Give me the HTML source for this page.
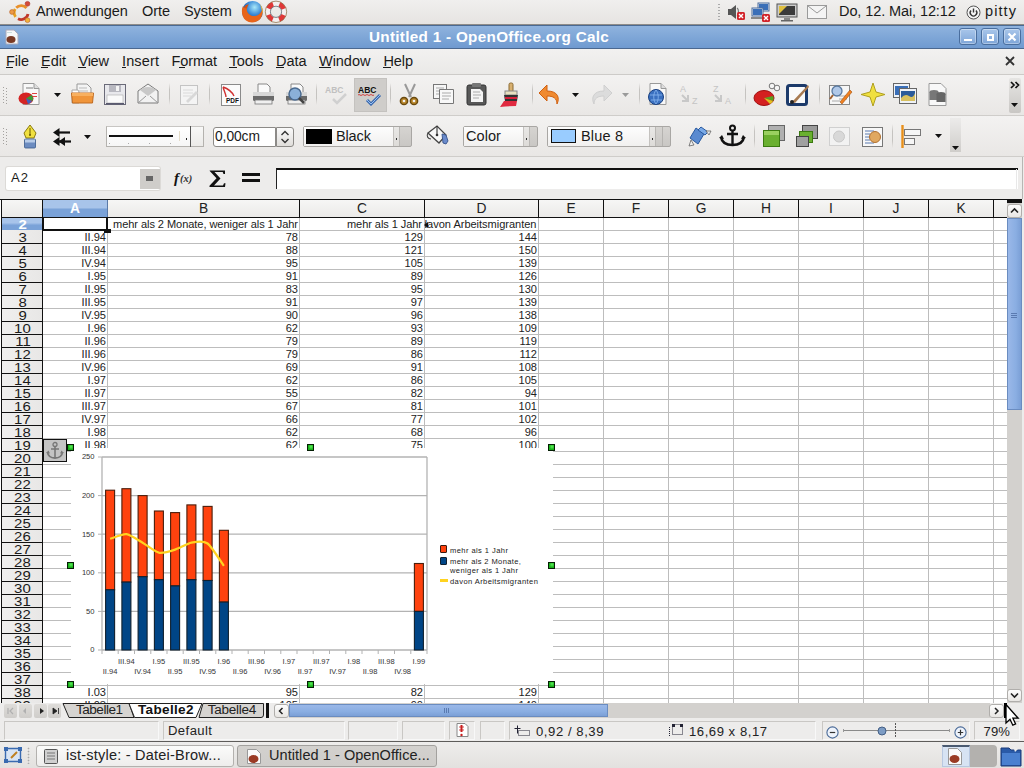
<!DOCTYPE html>
<html><head><meta charset="utf-8">
<style>
*{margin:0;padding:0;box-sizing:border-box}
html,body{width:1024px;height:768px;overflow:hidden;background:#edeceb;font-family:"Liberation Sans",sans-serif;position:relative}
.a{position:absolute}
.t{position:absolute;white-space:nowrap}
svg{display:block}
</style></head><body>
<div class="a" style="left:0px;top:0px;width:1024px;height:24px;background:linear-gradient(#f0efee,#e6e4e2);"></div>
<div class="a" style="left:0px;top:24px;width:1024px;height:1px;background:#8e8c89;"></div>
<svg class="a" style="left:2px;top:0px" width="30" height="24" viewBox="0 0 30 24">
<path d="M14.2 7.8 A7 7 0 0 1 24.5 8" fill="none" stroke="#e8902a" stroke-width="2.8"/>
<path d="M26 14 A7 7 0 0 1 16 18.8" fill="none" stroke="#c0392b" stroke-width="2.8"/>
<path d="M13.6 16.8 A7 7 0 0 1 13.2 9" fill="none" stroke="#e8a020" stroke-width="2.8"/>
<circle cx="25.5" cy="3.8" r="2.4" fill="#d54a38" stroke="#a8342a" stroke-width="0.6"/>
<circle cx="10" cy="12" r="2.4" fill="#ec9a44" stroke="#b8602a" stroke-width="0.6"/>
<circle cx="25.5" cy="20.2" r="2.4" fill="#f2b23a" stroke="#b8602a" stroke-width="0.6"/>
</svg>
<div class="t" style="left:36.00px;top:3.69px;font-size:14.53px;line-height:14.53px;color:#1a1a1a;letter-spacing:-0.095px;">Anwendungen</div>
<div class="t" style="left:142.00px;top:3.69px;font-size:14.53px;line-height:14.53px;color:#1a1a1a;letter-spacing:-0.090px;">Orte</div>
<div class="t" style="left:184.00px;top:3.69px;font-size:14.53px;line-height:14.53px;color:#1a1a1a;letter-spacing:-0.095px;">System</div>
<svg class="a" style="left:240px;top:0px" width="24" height="24" viewBox="0 0 24 24">
<defs><radialGradient id="ffg" cx="0.6" cy="0.3" r="0.7"><stop offset="0" stop-color="#a8e8f8"/><stop offset="0.5" stop-color="#3a8ad8"/><stop offset="1" stop-color="#1a3a80"/></radialGradient></defs>
<circle cx="12.5" cy="11.5" r="10.5" fill="url(#ffg)"/>
<path d="M3 6 C1 10 1.5 17 6 20.5 C10 23.5 17 23 20.5 18.5 C22.5 15.5 23 12 22.5 8.5 C21.5 12.5 19 15.5 15 16 C11 16.5 8 14 7 11 C6.5 9 7 7.5 8 6.5 C6 6.5 4.5 7 4 8z" fill="#e8641a"/>
<path d="M20 4 C22.5 7 23.5 11 22.5 14 C22 10 21 7 20 4z" fill="#f8b830"/>
<path d="M4 8 C5 5 7 4 9 4.5 C7.5 6 7 7 7 8.5z" fill="#d85010"/>
</svg>
<svg class="a" style="left:264px;top:0px" width="24" height="24" viewBox="0 0 24 24">
<circle cx="12" cy="11.8" r="8.2" fill="none" stroke="#f4f0f0" stroke-width="5"/>
<circle cx="12" cy="11.8" r="8.2" fill="none" stroke="#e03838" stroke-width="5" stroke-dasharray="6.44 6.44" stroke-dashoffset="-3.22"/>
<circle cx="12" cy="11.8" r="10.7" fill="none" stroke="#8a6a40" stroke-width="0.9" opacity="0.8"/>
<circle cx="12" cy="11.8" r="5.6" fill="none" stroke="#707880" stroke-width="0.9"/>
</svg>
<div class="a" style="left:718px;top:3px;width:2px;height:18px;background-image:radial-gradient(#aaa 40%,transparent 45%);background-size:2px 3px;"></div>
<svg class="a" style="left:726px;top:3px" width="20" height="18" viewBox="0 0 20 18">
<path d="M2 6h3l5-4v14l-5-4H2z" fill="#555" />
<path d="M11 5c2 1 2 7 0 8" stroke="#777" fill="none" stroke-width="1.2"/>
<rect x="11" y="9" width="8" height="8" rx="1.5" fill="#d2232a"/><path d="M13 11l4 4M17 11l-4 4" stroke="#fff" stroke-width="1.4"/>
</svg>
<svg class="a" style="left:750px;top:2px" width="22" height="21" viewBox="0 0 22 21">
<rect x="8" y="1" width="11" height="8" fill="#dfe6ef" stroke="#4c6c9c"/><rect x="9" y="2" width="9" height="6" fill="#3a6fb8"/>
<rect x="2" y="6" width="11" height="8" fill="#dfe6ef" stroke="#4c6c9c"/><rect x="3" y="7" width="9" height="6" fill="#3a6fb8"/>
<rect x="1" y="15" width="13" height="2" fill="#888"/>
<rect x="12" y="12" width="8" height="8" rx="1.5" fill="#d2232a"/><path d="M14 14l4 4M18 14l-4 4" stroke="#fff" stroke-width="1.4"/>
</svg>
<svg class="a" style="left:776px;top:3px" width="22" height="19" viewBox="0 0 22 19">
<rect x="1" y="1" width="20" height="13" fill="#ccc" stroke="#555"/><rect x="3" y="3" width="16" height="9" fill="#3b3b3b"/>
<path d="M3 3h8l-8 8z" fill="#e0c040"/><rect x="8" y="15" width="6" height="2" fill="#888"/><rect x="5" y="17" width="12" height="1.5" fill="#666"/>
</svg>
<svg class="a" style="left:806px;top:4px" width="22" height="16" viewBox="0 0 22 16">
<rect x="1.5" y="1.5" width="19" height="13" fill="#f4f4f4" stroke="#9a9a9a"/><path d="M2 2l9 7 9-7" fill="none" stroke="#9a9a9a"/>
</svg>
<div class="t" style="left:839.00px;top:3.69px;font-size:14.53px;line-height:14.53px;color:#1a1a1a;letter-spacing:-0.105px;">Do, 12. Mai, 12:12</div>
<svg class="a" style="left:966px;top:5px" width="15" height="15" viewBox="0 0 15 15">
<circle cx="7.5" cy="7.5" r="6.5" fill="#f4f4f4" stroke="#555" stroke-width="1"/>
<path d="M5 5.5a3.3 3.3 0 1 0 5 0" fill="none" stroke="#333" stroke-width="1.4"/><path d="M7.5 3.5v4" stroke="#333" stroke-width="1.4"/>
</svg>
<div class="t" style="left:985.00px;top:3.69px;font-size:14.53px;line-height:14.53px;color:#1a1a1a;letter-spacing:1.082px;">pitty</div>
<div class="a" style="left:0px;top:25px;width:1024px;height:1px;background:#4a6a93;"></div>
<div class="a" style="left:0px;top:26px;width:1024px;height:22px;background:linear-gradient(#8fb3de,#6f9ad0);"></div>
<div class="a" style="left:0px;top:48px;width:1024px;height:1px;background:#4b6890;"></div>
<svg class="a" style="left:5px;top:29px" width="14" height="16" viewBox="0 0 14 16">
<path d="M1 1h8l4 4v10H1z" fill="#f8f8f8" stroke="#aab"/>
<ellipse cx="6" cy="10.5" rx="4.5" ry="3.5" fill="#7a3a24"/>
<rect x="2" y="3" width="5" height="1" fill="#cdd"/>
</svg>
<div class="t" style="left:369.00px;top:28.57px;font-size:15.26px;line-height:15.26px;color:#ffffff;letter-spacing:0.302px;font-weight:bold;">Untitled 1 - OpenOffice.org Calc</div>
<div class="a" style="left:959px;top:28px;width:18px;height:17px;border:1px solid #4a6e9e;border-radius:3px;background:linear-gradient(#a9c6ea,#7ea5d8);box-shadow:inset 0 0 0 1px rgba(255,255,255,0.35);"></div>
<div class="a" style="left:981px;top:28px;width:18px;height:17px;border:1px solid #4a6e9e;border-radius:3px;background:linear-gradient(#a9c6ea,#7ea5d8);box-shadow:inset 0 0 0 1px rgba(255,255,255,0.35);"></div>
<div class="a" style="left:1003px;top:28px;width:18px;height:17px;border:1px solid #4a6e9e;border-radius:3px;background:linear-gradient(#a9c6ea,#7ea5d8);box-shadow:inset 0 0 0 1px rgba(255,255,255,0.35);"></div>
<div class="a" style="left:964px;top:39px;width:8px;height:2px;background:#fff;"></div>
<div class="a" style="left:987px;top:34px;width:7px;height:7px;border:2px solid #fff;"></div>
<svg class="a" style="left:1006px;top:31px" width="12" height="12" viewBox="0 0 12 12"><path d="M2.5 2.5l7 7M9.5 2.5l-7 7" stroke="#fff" stroke-width="2.2"/></svg>
<div class="a" style="left:0px;top:49px;width:1024px;height:25px;background:linear-gradient(#f2f1f0,#eae9e7);"></div>
<div class="a" style="left:0px;top:74px;width:1024px;height:1px;background:#cdcbc8;"></div>
<div class="t" style="left:6.00px;top:54.19px;font-size:14.53px;line-height:14.53px;color:#1a1a1a;letter-spacing:-0.146px;">File</div>
<div class="t" style="left:41.00px;top:54.19px;font-size:14.53px;line-height:14.53px;color:#1a1a1a;letter-spacing:-0.012px;">Edit</div>
<div class="t" style="left:78.50px;top:54.19px;font-size:14.53px;line-height:14.53px;color:#1a1a1a;letter-spacing:-0.262px;">View</div>
<div class="t" style="left:122.00px;top:54.19px;font-size:14.53px;line-height:14.53px;color:#1a1a1a;letter-spacing:0.133px;">Insert</div>
<div class="t" style="left:171.50px;top:54.19px;font-size:14.53px;line-height:14.53px;color:#1a1a1a;letter-spacing:-0.108px;">Format</div>
<div class="t" style="left:229.50px;top:54.19px;font-size:14.53px;line-height:14.53px;color:#1a1a1a;letter-spacing:0.015px;">Tools</div>
<div class="t" style="left:276.00px;top:54.19px;font-size:14.53px;line-height:14.53px;color:#1a1a1a;letter-spacing:-0.068px;">Data</div>
<div class="t" style="left:319.00px;top:54.19px;font-size:14.53px;line-height:14.53px;color:#1a1a1a;letter-spacing:-0.049px;">Window</div>
<div class="t" style="left:383.50px;top:54.19px;font-size:14.53px;line-height:14.53px;color:#1a1a1a;letter-spacing:-0.135px;">Help</div>
<div class="a" style="left:6px;top:67px;width:7px;height:1px;background:#1a1a1a;"></div>
<div class="a" style="left:41px;top:67px;width:7px;height:1px;background:#1a1a1a;"></div>
<div class="a" style="left:78px;top:67px;width:8px;height:1px;background:#1a1a1a;"></div>
<div class="a" style="left:122px;top:67px;width:4px;height:1px;background:#1a1a1a;"></div>
<div class="a" style="left:179px;top:67px;width:6px;height:1px;background:#1a1a1a;"></div>
<div class="a" style="left:229px;top:67px;width:8px;height:1px;background:#1a1a1a;"></div>
<div class="a" style="left:276px;top:67px;width:8px;height:1px;background:#1a1a1a;"></div>
<div class="a" style="left:319px;top:67px;width:12px;height:1px;background:#1a1a1a;"></div>
<div class="a" style="left:383px;top:67px;width:8px;height:1px;background:#1a1a1a;"></div>
<svg class="a" style="left:1004px;top:55px" width="12" height="12" viewBox="0 0 12 12"><path d="M2 2l8 8M10 2l-8 8" stroke="#333" stroke-width="1.8"/></svg>
<div class="a" style="left:0px;top:75px;width:1024px;height:40px;background:linear-gradient(#f3f2f1,#e9e7e5);"></div>
<div class="a" style="left:0px;top:115px;width:1024px;height:1px;background:#cfcdca;"></div>
<svg class="a" style="left:3px;top:87px" width="4" height="17" viewBox="0 0 4 17"><rect x="0" y="0" width="1" height="1" fill="#a3a19e"/><rect x="3" y="1" width="1" height="1" fill="#a3a19e"/><rect x="0" y="3" width="1" height="1" fill="#a3a19e"/><rect x="3" y="4" width="1" height="1" fill="#a3a19e"/><rect x="0" y="6" width="1" height="1" fill="#a3a19e"/><rect x="3" y="7" width="1" height="1" fill="#a3a19e"/><rect x="0" y="9" width="1" height="1" fill="#a3a19e"/><rect x="3" y="10" width="1" height="1" fill="#a3a19e"/><rect x="0" y="12" width="1" height="1" fill="#a3a19e"/><rect x="3" y="13" width="1" height="1" fill="#a3a19e"/><rect x="0" y="15" width="1" height="1" fill="#a3a19e"/><rect x="3" y="16" width="1" height="1" fill="#a3a19e"/></svg>
<svg class="a" style="left:17px;top:82px" width="25" height="25" viewBox="0 0 25 25"><path d="M6 1.5h11l5 5v16H6z" fill="#f8f8f8" stroke="#9a9a9a"/><path d="M17 1.5v5h5" fill="#ddd" stroke="#9a9a9a"/>
<rect x="9" y="5" width="7" height="2" fill="#bbb"/><rect x="15" y="11" width="5" height="1" fill="#e04040"/><rect x="15" y="14" width="5" height="1" fill="#e04040"/>
<ellipse cx="9" cy="16.5" rx="7.5" ry="6" fill="#d42424"/><path d="M9 16.5l5.5-3.5a7 6 0 0 1 1 6z" fill="#3a9a3a"/><path d="M9 16.5l2 5.5a7 6 0 0 0 4-3z" fill="#4060c0"/></svg>
<svg class="a" style="left:54px;top:93px" width="7" height="4" viewBox="0 0 7 4"><path d="M0 0h7l-3.5 4z" fill="#111"/></svg>
<svg class="a" style="left:70px;top:82px" width="26" height="24" viewBox="0 0 26 24"><path d="M7 2h10l4 4v12H7z" fill="#f4f4f4" stroke="#999"/><path d="M9 6h8M9 9h9" stroke="#bbb"/>
<path d="M2 8h6l1 2h-0v11H2z" fill="#fff" stroke="#aaa"/>
<path d="M1.5 11h22l-1 10h-20z" fill="#f0953a" stroke="#c06a20"/><path d="M2 11h21v3H2z" fill="#f8b060"/></svg>
<svg class="a" style="left:103px;top:82px" width="25" height="25" viewBox="0 0 25 25"><rect x="1.5" y="2.5" width="21" height="20" fill="#e8e8ec" stroke="#6a6a78"/><rect x="6" y="3" width="12" height="7" fill="#b8b8c0"/><rect x="13" y="4" width="3" height="5" fill="#f4f4f4"/>
<rect x="4" y="13" width="16" height="8" fill="#fafafa" stroke="#aaa" stroke-width="0.6"/><rect x="3" y="21" width="18" height="1.5" fill="#5a5a70"/></svg>
<svg class="a" style="left:136px;top:82px" width="24" height="24" viewBox="0 0 24 24"><path d="M2 9l10-7 10 7v12H2z" fill="#f2f2f2" stroke="#7a7a7a"/><path d="M4 8c3-4 13-4 16 0l-8 6z" fill="#c8c8c8"/><path d="M2 21l8-7M22 21l-8-7" stroke="#999" fill="none"/></svg>
<div class="a" style="left:169px;top:83px;width:1px;height:22px;background:linear-gradient(rgba(180,178,175,0),#c5c3c0 30%,#c5c3c0 70%,rgba(180,178,175,0));"></div>
<svg class="a" style="left:178px;top:83px" width="23" height="23" viewBox="0 0 23 23"><rect x="2.5" y="2.5" width="17" height="19" fill="#f4f4f4" stroke="#c4c4c4"/><path d="M5 7h10M5 10h10M5 13h8" stroke="#dadada"/><path d="M8 18l10-10 2 2-10 10z" fill="#d8d8d8"/></svg>
<div class="a" style="left:209px;top:83px;width:1px;height:22px;background:linear-gradient(rgba(180,178,175,0),#c5c3c0 30%,#c5c3c0 70%,rgba(180,178,175,0));"></div>
<svg class="a" style="left:219px;top:82px" width="24" height="26" viewBox="0 0 24 26"><rect x="2.5" y="2.5" width="19" height="21" fill="#fbfbfb" stroke="#8a8a8a"/><path d="M4 5c6 2 9 5 11 9M4 5c1 4 3 7 3 10" stroke="#d03030" fill="none" stroke-width="1.4"/>
<text x="7" y="21" font-family="Liberation Sans" font-size="6.5" font-weight="bold" fill="#111">PDF</text></svg>
<svg class="a" style="left:251px;top:82px" width="25" height="24" viewBox="0 0 25 24"><path d="M7 2h9l3 3v6H7z" fill="#fafafa" stroke="#888"/><rect x="2" y="10" width="21" height="9" rx="1.5" fill="#6a6a6a"/><rect x="2" y="10" width="21" height="4" fill="#d8d8d8"/>
<rect x="4" y="18" width="17" height="4" fill="#f0f0f0" stroke="#777" stroke-width="0.8"/></svg>
<svg class="a" style="left:284px;top:82px" width="25" height="25" viewBox="0 0 25 25"><path d="M7 2h9l3 3v6H7z" fill="#fafafa" stroke="#888"/><rect x="2" y="10" width="21" height="9" rx="1.5" fill="#6a6a6a"/><rect x="2" y="10" width="21" height="4" fill="#d8d8d8"/>
<rect x="4" y="18" width="17" height="4" fill="#f0f0f0" stroke="#777" stroke-width="0.8"/><circle cx="11" cy="12" r="6" fill="#8ab0d8" stroke="#4a6a90" stroke-width="1.5"/><path d="M15 16l5 5" stroke="#444" stroke-width="2.5"/></svg>
<div class="a" style="left:316px;top:83px;width:1px;height:22px;background:linear-gradient(rgba(180,178,175,0),#c5c3c0 30%,#c5c3c0 70%,rgba(180,178,175,0));"></div>
<svg class="a" style="left:324px;top:84px" width="26" height="22" viewBox="0 0 26 22"><text x="1" y="9" font-family="Liberation Sans" font-size="8.5" font-weight="bold" fill="#c0c0c0">ABC</text><path d="M9 15l4 4 9-9" stroke="#d0d0d0" stroke-width="2.5" fill="none"/></svg>
<div class="a" style="left:354px;top:78px;width:33px;height:34px;background:#cfcdca;border:1px solid #c4c2bf;"></div>
<svg class="a" style="left:357px;top:84px" width="27" height="22" viewBox="0 0 27 22"><text x="1" y="9" font-family="Liberation Sans" font-size="8.5" font-weight="bold" fill="#111">ABC</text><path d="M1 11q1-1 2 0t2 0 2 0 2 0 2 0 2 0 2 0 2 0" stroke="#d02020" fill="none" stroke-width="0.8"/><path d="M10 16l4 4 9-9" stroke="#3a6ab0" stroke-width="3" fill="none"/><path d="M10 16l4 4 9-9" stroke="#9ac0f0" stroke-width="1" fill="none"/></svg>
<div class="a" style="left:390px;top:83px;width:1px;height:22px;background:linear-gradient(rgba(180,178,175,0),#c5c3c0 30%,#c5c3c0 70%,rgba(180,178,175,0));"></div>
<svg class="a" style="left:398px;top:82px" width="24" height="25" viewBox="0 0 24 25"><path d="M7 2l6 13M17 2l-6 13" stroke="#999" stroke-width="2"/><circle cx="6" cy="19" r="3.6" fill="#b8862a" stroke="#6a4a10" stroke-width="1.5"/><circle cx="16" cy="19" r="3.6" fill="#b8862a" stroke="#6a4a10" stroke-width="1.5"/><circle cx="6" cy="19" r="1.3" fill="#f0f0f0"/><circle cx="16" cy="19" r="1.3" fill="#f0f0f0"/></svg>
<svg class="a" style="left:432px;top:83px" width="24" height="22" viewBox="0 0 24 22"><rect x="1.5" y="1.5" width="13" height="14" fill="#f6f6f6" stroke="#777"/><path d="M4 5h8M4 8h8M4 11h6" stroke="#aaa"/><path d="M7.5 6.5h14v14h-14z" fill="#f8f8f8" stroke="#777"/><path d="M10 10h9M10 13h9M10 16h7" stroke="#aaa"/></svg>
<svg class="a" style="left:465px;top:82px" width="24" height="25" viewBox="0 0 24 25"><rect x="2" y="3" width="19" height="20" rx="2" fill="#585858" stroke="#333"/><rect x="7" y="1" width="9" height="4" rx="1" fill="#777"/><path d="M6 7h9l3 3v10H6z" fill="#f4f4f4"/><path d="M8 10h7M8 13h8M8 16h6" stroke="#aaa"/></svg>
<svg class="a" style="left:498px;top:82px" width="24" height="26" viewBox="0 0 24 26"><rect x="11" y="1" width="4" height="9" rx="1.5" fill="#d8b070" stroke="#8a6a30"/><rect x="7" y="9" width="12" height="4" fill="#e8e0c0" stroke="#888"/><path d="M6 13h14l-1 6H7z" fill="#333"/><path d="M7 15h12v2H7z" fill="#d8203a"/><path d="M6 19h13L18 24q-7 0-16 1z" fill="#e02a40"/></svg>
<div class="a" style="left:532px;top:83px;width:1px;height:22px;background:linear-gradient(rgba(180,178,175,0),#c5c3c0 30%,#c5c3c0 70%,rgba(180,178,175,0));"></div>
<svg class="a" style="left:537px;top:83px" width="26" height="23" viewBox="0 0 26 23"><path d="M10 2L2 10l8 8v-5c6 0 10 2 10 8 3-6 1-13-10-13z" fill="#f08a30" stroke="#d06010" stroke-width="1"/></svg>
<svg class="a" style="left:572px;top:93px" width="7" height="4" viewBox="0 0 7 4"><path d="M0 0h7l-3.5 4z" fill="#111"/></svg>
<svg class="a" style="left:588px;top:83px" width="26" height="23" viewBox="0 0 26 23"><path d="M16 2l8 8-8 8v-5c-6 0-10 2-10 8-3-6-1-13 10-13z" fill="#dcdcdc" stroke="#cfcfcf" stroke-width="1"/></svg>
<svg class="a" style="left:622px;top:93px" width="7" height="4" viewBox="0 0 7 4"><path d="M0 0h7l-3.5 4z" fill="#9a9a9a"/></svg>
<div class="a" style="left:639px;top:83px;width:1px;height:22px;background:linear-gradient(rgba(180,178,175,0),#c5c3c0 30%,#c5c3c0 70%,rgba(180,178,175,0));"></div>
<svg class="a" style="left:645px;top:82px" width="25" height="25" viewBox="0 0 25 25"><path d="M5 1.5h11l5 5v16H5z" fill="#f8f8f8" stroke="#999"/><path d="M16 1.5v5h5" fill="#ddd" stroke="#999"/><circle cx="11" cy="15" r="7.5" fill="#3a70c0" stroke="#1a4080"/><path d="M5 13h12M6 18h11M11 8c-3 4-3 10 0 14M11 8c3 4 3 10 0 14" stroke="#8ab8f0" fill="none" stroke-width="0.8"/></svg>
<svg class="a" style="left:679px;top:82px" width="24" height="25" viewBox="0 0 24 25"><text x="1" y="10" font-family="Liberation Sans" font-size="9" fill="#c4c4c4">A</text><text x="13" y="22" font-family="Liberation Sans" font-size="9" fill="#c4c4c4">Z</text><path d="M3 13l6 6M3 19h6v-6" stroke="#c8c8c8" stroke-width="2" fill="none"/></svg>
<svg class="a" style="left:712px;top:82px" width="24" height="25" viewBox="0 0 24 25"><text x="1" y="10" font-family="Liberation Sans" font-size="9" fill="#c4c4c4">Z</text><text x="13" y="22" font-family="Liberation Sans" font-size="9" fill="#c4c4c4">A</text><path d="M3 13l6 6M3 19h6v-6" stroke="#c8c8c8" stroke-width="2" fill="none"/></svg>
<div class="a" style="left:745px;top:83px;width:1px;height:22px;background:linear-gradient(rgba(180,178,175,0),#c5c3c0 30%,#c5c3c0 70%,rgba(180,178,175,0));"></div>
<svg class="a" style="left:752px;top:82px" width="28" height="25" viewBox="0 0 28 25"><circle cx="20" cy="4" r="2.8" fill="#f4f4f4" stroke="#777"/><circle cx="25" cy="6" r="2.8" fill="#f4f4f4" stroke="#777"/><ellipse cx="12" cy="16" rx="10" ry="7.5" fill="#d42020" stroke="#a01010"/><path d="M12 16l9-2a10 7.5 0 0 1 0 5z" fill="#58a020"/><path d="M12 16l9 3a10 7.5 0 0 1-3 3z" fill="#e0c020"/></svg>
<svg class="a" style="left:786px;top:82px" width="24" height="25" viewBox="0 0 24 25"><rect x="1.5" y="3.5" width="19" height="19" rx="2" fill="#fafafa" stroke="#1c3a6a" stroke-width="3"/><path d="M6 20L22 3l1 2L9 21z" fill="#a87a50"/><circle cx="6" cy="20" r="2" fill="#222"/></svg>
<div class="a" style="left:819px;top:83px;width:1px;height:22px;background:linear-gradient(rgba(180,178,175,0),#c5c3c0 30%,#c5c3c0 70%,rgba(180,178,175,0));"></div>
<svg class="a" style="left:828px;top:82px" width="25" height="25" viewBox="0 0 25 25"><rect x="1.5" y="3.5" width="20" height="19" fill="#f6f6f6" stroke="#888"/><path d="M11 14h8M11 17h8M4 19h8" stroke="#aaa"/><circle cx="9" cy="9" r="5" fill="#b0c8e8" stroke="#5a7aa0" stroke-width="1.3"/><path d="M5 13l-3 4" stroke="#a06030" stroke-width="2"/><path d="M12 20l10-12 2 2-10 12z" fill="#f08020" stroke="#a05010" stroke-width="0.6"/></svg>
<svg class="a" style="left:860px;top:82px" width="26" height="25" viewBox="0 0 26 25"><path d="M13 1L16 10 25 12.5 16 15 13 24 10 15 1 12.5 10 10z" fill="#f0e040" stroke="#b0a020" stroke-width="1"/></svg>
<svg class="a" style="left:892px;top:82px" width="26" height="23" viewBox="0 0 26 23"><rect x="1.5" y="1.5" width="16" height="14" fill="#eef2f8" stroke="#666"/><rect x="3" y="4" width="13" height="9" fill="#3a6fb8"/><rect x="7.5" y="6.5" width="17" height="15" fill="#eef2f8" stroke="#666"/><rect x="9" y="9" width="14" height="10" fill="#2a5a9a"/><path d="M9 16q4-5 8-2t6-3v8H9z" fill="#d8c060"/></svg>
<svg class="a" style="left:925px;top:82px" width="25" height="25" viewBox="0 0 25 25"><path d="M4 1.5h12l5 5v17H4z" fill="#f8f8f8" stroke="#999"/><ellipse cx="9" cy="10" rx="4.5" ry="2" fill="#777"/><rect x="4.5" y="10" width="9" height="8" fill="#777"/><ellipse cx="16" cy="12" rx="4.5" ry="2" fill="#666"/><rect x="11.5" y="12" width="9" height="8" fill="#666"/></svg>
<div class="a" style="left:1009px;top:78px;width:12px;height:35px;background:linear-gradient(#e6e5e3,#c9c7c4);border-radius:2px;"></div>
<svg class="a" style="left:1010px;top:81px" width="10" height="8" viewBox="0 0 10 8"><path d="M1 1l3 3-3 3M5.5 1l3 3-3 3" stroke="#111" stroke-width="1.7" fill="none"/></svg>
<svg class="a" style="left:1011px;top:103px" width="7" height="4" viewBox="0 0 7 4"><path d="M0 0h7l-3.5 4z" fill="#111"/></svg>
<div class="a" style="left:0px;top:116px;width:1024px;height:40px;background:linear-gradient(#f3f2f1,#e9e7e5);"></div>
<div class="a" style="left:0px;top:156px;width:1024px;height:1px;background:#cfcdca;"></div>
<svg class="a" style="left:3px;top:128px" width="4" height="17" viewBox="0 0 4 17"><rect x="0" y="0" width="1" height="1" fill="#a3a19e"/><rect x="3" y="1" width="1" height="1" fill="#a3a19e"/><rect x="0" y="3" width="1" height="1" fill="#a3a19e"/><rect x="3" y="4" width="1" height="1" fill="#a3a19e"/><rect x="0" y="6" width="1" height="1" fill="#a3a19e"/><rect x="3" y="7" width="1" height="1" fill="#a3a19e"/><rect x="0" y="9" width="1" height="1" fill="#a3a19e"/><rect x="3" y="10" width="1" height="1" fill="#a3a19e"/><rect x="0" y="12" width="1" height="1" fill="#a3a19e"/><rect x="3" y="13" width="1" height="1" fill="#a3a19e"/><rect x="0" y="15" width="1" height="1" fill="#a3a19e"/><rect x="3" y="16" width="1" height="1" fill="#a3a19e"/></svg>
<svg class="a" style="left:21px;top:124px" width="18" height="25" viewBox="0 0 18 25"><path d="M9 1L15 9 13 14H5L3 9z" fill="#f0e040" stroke="#8a7a10"/><path d="M9 4v7" stroke="#6a5a00"/><circle cx="9" cy="11" r="1" fill="#6a5a00"/><rect x="3.5" y="15" width="11" height="9" rx="1" fill="#6c8cc0" stroke="#3a5a8a" stroke-width="0.8"/><rect x="4" y="15.5" width="10" height="3" fill="#b8cce8"/></svg>
<svg class="a" style="left:50px;top:127px" width="23" height="19" viewBox="0 0 23 19"><path d="M20 5.5H5" stroke="#111" stroke-width="2.2"/><path d="M9.5 1L3 5.5l6.5 4.5z" fill="#111"/><path d="M21 14.5H7" stroke="#111" stroke-width="2.2"/><path d="M9.5 10L3 14.5l6.5 4.5zM15 10l-6.5 4.5 6.5 4.5z" fill="#111"/></svg>
<svg class="a" style="left:84px;top:135px" width="7" height="4" viewBox="0 0 7 4"><path d="M0 0h7l-3.5 4z" fill="#111"/></svg>
<div class="a" style="left:106px;top:126px;width:98px;height:21px;background:#f4f3f2;border:1px solid #b4b2ae;border-top-color:#c8c6c3;"></div>
<div class="a" style="left:107px;top:127px;width:83px;height:19px;background:linear-gradient(#fff,#f6f6f6);"></div>
<div class="a" style="left:109px;top:135px;width:64px;height:2px;background:#111;"></div>
<div class="a" style="left:179px;top:131px;width:1px;height:10px;background:#e4dcc8;"></div>
<div class="a" style="left:186px;top:138px;width:1px;height:2px;background:#222;"></div>
<div class="a" style="left:190px;top:126px;width:1px;height:21px;background:#555;"></div>
<div class="a" style="left:191px;top:127px;width:12px;height:19px;background:linear-gradient(#f8f8f7,#ebeae8);"></div>
<div class="a" style="left:109px;top:143px;width:1px;height:1px;background:#aaa;"></div>
<div class="a" style="left:128px;top:143px;width:1px;height:1px;background:#aaa;"></div>
<div class="a" style="left:149px;top:143px;width:1px;height:1px;background:#aaa;"></div>
<div class="a" style="left:170px;top:143px;width:1px;height:1px;background:#aaa;"></div>
<div class="a" style="left:213px;top:127px;width:63px;height:20px;background:#fff;border:1px solid #8c8a87;border-radius:3px 0 0 3px;"></div>
<div class="t" style="left:215.00px;top:129.80px;font-size:13.81px;line-height:13.81px;color:#1a1a1a;letter-spacing:-0.058px;">0,00cm</div>
<div class="a" style="left:276px;top:127px;width:18px;height:20px;background:linear-gradient(#fafafa,#e0dedb);border:1px solid #8c8a87;border-radius:0 3px 3px 0;"></div>
<svg class="a" style="left:279px;top:129px" width="12" height="16" viewBox="0 0 12 16"><path d="M2.5 6l3.5-3.5L9.5 6M2.5 10l3.5 3.5L9.5 10" stroke="#333" stroke-width="1.4" fill="none"/></svg>
<div class="a" style="left:303px;top:126px;width:109px;height:21px;background:linear-gradient(#d6d4d1,#c9c7c4);border:1px solid #a9a7a4;border-radius:2px;"></div>
<div class="a" style="left:304px;top:127px;width:89px;height:19px;background:linear-gradient(#fdfdfd,#f1f0ef);"></div>
<div class="a" style="left:393px;top:127px;width:7px;height:19px;background:linear-gradient(#e9e8e6,#dddbd8);border-left:1px solid #c4c2bf;border-right:1px solid #b9b7b4;"></div>
<div class="a" style="left:396px;top:138px;width:1px;height:2px;background:#333;"></div>
<div class="a" style="left:306px;top:129px;width:26px;height:15px;background:#000;"></div>
<div class="t" style="left:336.00px;top:128.69px;font-size:14.53px;line-height:14.53px;color:#1a1a1a;letter-spacing:-0.144px;">Black</div>
<svg class="a" style="left:425px;top:123px" width="25" height="25" viewBox="0 0 25 25"><path d="M3 10l9-7 9 9-7 8z" fill="#f8f8f8" stroke="#444" stroke-width="1.3"/><path d="M3 10c-2 3 0 6 3 6" stroke="#444" fill="none" stroke-width="1.1"/><path d="M17 11l4 1 2 6-2 3-3-1z" fill="#6a8acb" stroke="#36528a" stroke-width="0.9"/><path d="M12 3v8" stroke="#333" stroke-width="1.1"/><circle cx="12" cy="12" r="1.3" fill="#333"/></svg>
<div class="a" style="left:463px;top:126px;width:75px;height:21px;background:linear-gradient(#d6d4d1,#c9c7c4);border:1px solid #a9a7a4;border-radius:2px;"></div>
<div class="a" style="left:464px;top:127px;width:59px;height:19px;background:linear-gradient(#fdfdfd,#f1f0ef);"></div>
<div class="a" style="left:523px;top:127px;width:7px;height:19px;background:linear-gradient(#e9e8e6,#dddbd8);border-left:1px solid #c4c2bf;border-right:1px solid #b9b7b4;"></div>
<div class="a" style="left:526px;top:138px;width:1px;height:2px;background:#333;"></div>
<div class="t" style="left:466.00px;top:128.69px;font-size:14.53px;line-height:14.53px;color:#1a1a1a;letter-spacing:0.065px;">Color</div>
<div class="a" style="left:547px;top:126px;width:124px;height:21px;background:linear-gradient(#d6d4d1,#c9c7c4);border:1px solid #a9a7a4;border-radius:2px;"></div>
<div class="a" style="left:548px;top:127px;width:101px;height:19px;background:linear-gradient(#fdfdfd,#f1f0ef);"></div>
<div class="a" style="left:649px;top:127px;width:7px;height:19px;background:linear-gradient(#e9e8e6,#dddbd8);border-left:1px solid #c4c2bf;border-right:1px solid #b9b7b4;"></div>
<div class="a" style="left:652px;top:138px;width:1px;height:2px;background:#333;"></div>
<div class="a" style="left:662px;top:127px;width:1px;height:19px;background:#b5b3b0;"></div>
<div class="a" style="left:551px;top:129px;width:25px;height:14px;background:#99ccff;border:1px solid #111;"></div>
<div class="t" style="left:581.00px;top:128.69px;font-size:14.53px;line-height:14.53px;color:#1a1a1a;letter-spacing:0.159px;">Blue 8</div>
<svg class="a" style="left:687px;top:125px" width="26" height="23" viewBox="0 0 26 23"><path d="M9 3l8 6-6 10-8-6z" fill="#5a8ad0" stroke="#2a5aa0"/><path d="M14 2l7 5-3 3-7-5z" fill="#7aaae8" stroke="#2a5aa0"/><path d="M19 6l5 0-2 4z" fill="#eee" stroke="#555" stroke-width="0.7"/><path d="M4 15l3 5-5 1z" fill="#eee" stroke="#555" stroke-width="0.7"/></svg>
<svg class="a" style="left:719px;top:124px" width="27" height="24" viewBox="0 0 27 24"><circle cx="13.5" cy="4" r="2.5" fill="none" stroke="#111" stroke-width="2"/><path d="M13.5 6.5V21M8 10h11" stroke="#111" stroke-width="2.4"/><path d="M2 13c1 6 6 8 11.5 8s10.5-2 11.5-8" stroke="#111" stroke-width="2.6" fill="none"/><path d="M0 14l3-3 2 4zM27 14l-3-3-2 4z" fill="#111"/></svg>
<div class="a" style="left:754px;top:124px;width:1px;height:24px;background:linear-gradient(rgba(180,178,175,0),#c5c3c0 30%,#c5c3c0 70%,rgba(180,178,175,0));"></div>
<svg class="a" style="left:761px;top:124px" width="26" height="25" viewBox="0 0 26 25"><rect x="7.5" y="1.5" width="16" height="15" fill="#b0b0b0" stroke="#666"/><rect x="2.5" y="6.5" width="16" height="16" fill="#6ab030" stroke="#3a7a10"/><rect x="3" y="7" width="15" height="4" fill="#9ad060"/></svg>
<svg class="a" style="left:794px;top:124px" width="26" height="25" viewBox="0 0 26 25"><rect x="8.5" y="1.5" width="15" height="13" fill="#9a9a9a" stroke="#444"/><rect x="5.5" y="7.5" width="13" height="11" fill="#6ab030" stroke="#3a7a10"/><rect x="2.5" y="12.5" width="12" height="10" fill="#a0a0a0" stroke="#444"/></svg>
<svg class="a" style="left:827px;top:124px" width="25" height="25" viewBox="0 0 25 25"><rect x="2.5" y="3.5" width="20" height="18" fill="#f2f2f2" stroke="#d0d0d0"/><circle cx="12" cy="12.5" r="5.5" fill="#d8d8d8" stroke="#c8c8c8"/></svg>
<svg class="a" style="left:860px;top:124px" width="25" height="25" viewBox="0 0 25 25"><rect x="2.5" y="3.5" width="20" height="19" fill="#f8f8f8" stroke="#777"/><path d="M5 7h9M5 10h5M5 13h5M5 16h5M5 19h9" stroke="#5a7ab0"/><circle cx="15" cy="13" r="5.5" fill="#e0a860" stroke="#b07030"/></svg>
<div class="a" style="left:892px;top:124px;width:1px;height:24px;background:linear-gradient(rgba(180,178,175,0),#c5c3c0 30%,#c5c3c0 70%,rgba(180,178,175,0));"></div>
<svg class="a" style="left:899px;top:124px" width="28" height="25" viewBox="0 0 28 25"><path d="M3.5 1v23" stroke="#e8901a" stroke-width="2.4"/><rect x="5.5" y="5.5" width="16" height="6" fill="#f6f6f6" stroke="#777"/><rect x="5.5" y="14.5" width="10" height="6" fill="#f6f6f6" stroke="#777"/></svg>
<svg class="a" style="left:935px;top:134px" width="7" height="4" viewBox="0 0 7 4"><path d="M0 0h7l-3.5 4z" fill="#111"/></svg>
<div class="a" style="left:950px;top:118px;width:11px;height:34px;background:linear-gradient(#ecebea,#cfcdca);"></div>
<svg class="a" style="left:952px;top:146px" width="7" height="4" viewBox="0 0 7 4"><path d="M0 0h7l-3.5 4z" fill="#111"/></svg>
<div class="a" style="left:0px;top:157px;width:1024px;height:42px;background:#edeceb;"></div>
<div class="a" style="left:6px;top:167px;width:154px;height:23px;background:#fff;border-radius:2px;box-shadow:0 0 0 1px #dcdad7;"></div>
<div class="t" style="left:11.00px;top:171.42px;font-size:13.08px;line-height:13.08px;color:#1a1a1a;letter-spacing:1.008px;">A2</div>
<div class="a" style="left:140px;top:169px;width:20px;height:20px;background:#cfcdca;"></div>
<div class="a" style="left:146px;top:176px;width:7px;height:5px;background:#666;"></div>
<div class="t" style="left:174px;top:169px;font-family:'Liberation Serif',serif;font-style:italic;font-weight:bold;font-size:15px;line-height:18px;color:#111;">f</div>
<div class="t" style="left:180px;top:172px;font-family:'Liberation Serif',serif;font-style:italic;font-weight:bold;font-size:10.5px;line-height:14px;color:#333;">(x)</div>
<svg class="a" style="left:208px;top:169px" width="19" height="19" viewBox="0 0 19 19"><path d="M2 1.5h15v3.5h-1.5l-0.8-2H6.5l6 6.5-6.5 7h9l1-2.3H17.5L17 18H1.5v-1.2l7-7.5-7-7.6z" fill="#111"/></svg>
<div class="a" style="left:242px;top:173px;width:18px;height:3px;background:#111;"></div>
<div class="a" style="left:242px;top:179px;width:18px;height:3px;background:#111;"></div>
<div class="a" style="left:276px;top:168px;width:742px;height:21px;background:#fff;border-top:2px solid #111;border-left:1px solid #222;"></div>
<div class="a" style="left:1016px;top:169px;width:1px;height:20px;background:#e8e8e8;"></div>
<div class="a" style="left:0px;top:199px;width:1007px;height:504px;background:#fff;"></div>
<div class="a" style="left:0px;top:199px;width:1022px;height:1px;background:#111;"></div>
<div class="a" style="left:1px;top:199px;width:1px;height:504px;background:#111;"></div>
<div class="a" style="left:2px;top:200px;width:1005px;height:17px;background:linear-gradient(#f6f6f5,#ebeae8);"></div>
<div class="a" style="left:43px;top:200px;width:64px;height:17px;background:linear-gradient(#a8c4ea 0%,#a8c4ea 45%,#7aa2d8 55%,#7aa2d8 100%);"></div>
<div class="a" style="left:2px;top:217px;width:1005px;height:1px;background:#111;"></div>
<div class="a" style="left:42px;top:200px;width:1px;height:17px;background:#111;"></div>
<div class="a" style="left:107px;top:200px;width:1px;height:17px;background:#5a7aa8;"></div>
<div class="a" style="left:299px;top:200px;width:1px;height:17px;background:#111;"></div>
<div class="a" style="left:424px;top:200px;width:1px;height:17px;background:#111;"></div>
<div class="a" style="left:538px;top:200px;width:1px;height:17px;background:#111;"></div>
<div class="a" style="left:603px;top:200px;width:1px;height:17px;background:#111;"></div>
<div class="a" style="left:668px;top:200px;width:1px;height:17px;background:#111;"></div>
<div class="a" style="left:733px;top:200px;width:1px;height:17px;background:#111;"></div>
<div class="a" style="left:798px;top:200px;width:1px;height:17px;background:#111;"></div>
<div class="a" style="left:863px;top:200px;width:1px;height:17px;background:#111;"></div>
<div class="a" style="left:928px;top:200px;width:1px;height:17px;background:#111;"></div>
<div class="a" style="left:993px;top:200px;width:1px;height:17px;background:#111;"></div>
<div class="a" style="left:2px;top:218px;width:40px;height:485px;background:linear-gradient(90deg,#f0efee,#e8e7e6);"></div>
<div class="a" style="left:2px;top:218px;width:40px;height:12px;background:linear-gradient(#a8c4ea 0%,#a8c4ea 40%,#7aa2d8 60%,#7aa2d8 100%);"></div>
<div class="a" style="left:42px;top:200px;width:1px;height:503px;background:#111;"></div>
<div class="a" style="left:2px;top:243px;width:40px;height:1px;background:#111;"></div>
<div class="a" style="left:2px;top:256px;width:40px;height:1px;background:#111;"></div>
<div class="a" style="left:2px;top:269px;width:40px;height:1px;background:#111;"></div>
<div class="a" style="left:2px;top:282px;width:40px;height:1px;background:#111;"></div>
<div class="a" style="left:2px;top:295px;width:40px;height:1px;background:#111;"></div>
<div class="a" style="left:2px;top:308px;width:40px;height:1px;background:#111;"></div>
<div class="a" style="left:2px;top:321px;width:40px;height:1px;background:#111;"></div>
<div class="a" style="left:2px;top:334px;width:40px;height:1px;background:#111;"></div>
<div class="a" style="left:2px;top:347px;width:40px;height:1px;background:#111;"></div>
<div class="a" style="left:2px;top:360px;width:40px;height:1px;background:#111;"></div>
<div class="a" style="left:2px;top:373px;width:40px;height:1px;background:#111;"></div>
<div class="a" style="left:2px;top:386px;width:40px;height:1px;background:#111;"></div>
<div class="a" style="left:2px;top:399px;width:40px;height:1px;background:#111;"></div>
<div class="a" style="left:2px;top:412px;width:40px;height:1px;background:#111;"></div>
<div class="a" style="left:2px;top:425px;width:40px;height:1px;background:#111;"></div>
<div class="a" style="left:2px;top:438px;width:40px;height:1px;background:#111;"></div>
<div class="a" style="left:2px;top:451px;width:40px;height:1px;background:#111;"></div>
<div class="a" style="left:2px;top:464px;width:40px;height:1px;background:#111;"></div>
<div class="a" style="left:2px;top:477px;width:40px;height:1px;background:#111;"></div>
<div class="a" style="left:2px;top:490px;width:40px;height:1px;background:#111;"></div>
<div class="a" style="left:2px;top:503px;width:40px;height:1px;background:#111;"></div>
<div class="a" style="left:2px;top:516px;width:40px;height:1px;background:#111;"></div>
<div class="a" style="left:2px;top:529px;width:40px;height:1px;background:#111;"></div>
<div class="a" style="left:2px;top:542px;width:40px;height:1px;background:#111;"></div>
<div class="a" style="left:2px;top:555px;width:40px;height:1px;background:#111;"></div>
<div class="a" style="left:2px;top:568px;width:40px;height:1px;background:#111;"></div>
<div class="a" style="left:2px;top:581px;width:40px;height:1px;background:#111;"></div>
<div class="a" style="left:2px;top:594px;width:40px;height:1px;background:#111;"></div>
<div class="a" style="left:2px;top:607px;width:40px;height:1px;background:#111;"></div>
<div class="a" style="left:2px;top:620px;width:40px;height:1px;background:#111;"></div>
<div class="a" style="left:2px;top:633px;width:40px;height:1px;background:#111;"></div>
<div class="a" style="left:2px;top:646px;width:40px;height:1px;background:#111;"></div>
<div class="a" style="left:2px;top:659px;width:40px;height:1px;background:#111;"></div>
<div class="a" style="left:2px;top:672px;width:40px;height:1px;background:#111;"></div>
<div class="a" style="left:2px;top:685px;width:40px;height:1px;background:#111;"></div>
<div class="a" style="left:2px;top:698px;width:40px;height:1px;background:#111;"></div>
<div class="a" style="left:43px;top:230px;width:964px;height:1px;background:#bdbdbd;"></div>
<div class="a" style="left:43px;top:243px;width:964px;height:1px;background:#bdbdbd;"></div>
<div class="a" style="left:43px;top:256px;width:964px;height:1px;background:#bdbdbd;"></div>
<div class="a" style="left:43px;top:269px;width:964px;height:1px;background:#bdbdbd;"></div>
<div class="a" style="left:43px;top:282px;width:964px;height:1px;background:#bdbdbd;"></div>
<div class="a" style="left:43px;top:295px;width:964px;height:1px;background:#bdbdbd;"></div>
<div class="a" style="left:43px;top:308px;width:964px;height:1px;background:#bdbdbd;"></div>
<div class="a" style="left:43px;top:321px;width:964px;height:1px;background:#bdbdbd;"></div>
<div class="a" style="left:43px;top:334px;width:964px;height:1px;background:#bdbdbd;"></div>
<div class="a" style="left:43px;top:347px;width:964px;height:1px;background:#bdbdbd;"></div>
<div class="a" style="left:43px;top:360px;width:964px;height:1px;background:#bdbdbd;"></div>
<div class="a" style="left:43px;top:373px;width:964px;height:1px;background:#bdbdbd;"></div>
<div class="a" style="left:43px;top:386px;width:964px;height:1px;background:#bdbdbd;"></div>
<div class="a" style="left:43px;top:399px;width:964px;height:1px;background:#bdbdbd;"></div>
<div class="a" style="left:43px;top:412px;width:964px;height:1px;background:#bdbdbd;"></div>
<div class="a" style="left:43px;top:425px;width:964px;height:1px;background:#bdbdbd;"></div>
<div class="a" style="left:43px;top:438px;width:964px;height:1px;background:#bdbdbd;"></div>
<div class="a" style="left:43px;top:451px;width:964px;height:1px;background:#bdbdbd;"></div>
<div class="a" style="left:43px;top:464px;width:964px;height:1px;background:#bdbdbd;"></div>
<div class="a" style="left:43px;top:477px;width:964px;height:1px;background:#bdbdbd;"></div>
<div class="a" style="left:43px;top:490px;width:964px;height:1px;background:#bdbdbd;"></div>
<div class="a" style="left:43px;top:503px;width:964px;height:1px;background:#bdbdbd;"></div>
<div class="a" style="left:43px;top:516px;width:964px;height:1px;background:#bdbdbd;"></div>
<div class="a" style="left:43px;top:529px;width:964px;height:1px;background:#bdbdbd;"></div>
<div class="a" style="left:43px;top:542px;width:964px;height:1px;background:#bdbdbd;"></div>
<div class="a" style="left:43px;top:555px;width:964px;height:1px;background:#bdbdbd;"></div>
<div class="a" style="left:43px;top:568px;width:964px;height:1px;background:#bdbdbd;"></div>
<div class="a" style="left:43px;top:581px;width:964px;height:1px;background:#bdbdbd;"></div>
<div class="a" style="left:43px;top:594px;width:964px;height:1px;background:#bdbdbd;"></div>
<div class="a" style="left:43px;top:607px;width:964px;height:1px;background:#bdbdbd;"></div>
<div class="a" style="left:43px;top:620px;width:964px;height:1px;background:#bdbdbd;"></div>
<div class="a" style="left:43px;top:633px;width:964px;height:1px;background:#bdbdbd;"></div>
<div class="a" style="left:43px;top:646px;width:964px;height:1px;background:#bdbdbd;"></div>
<div class="a" style="left:43px;top:659px;width:964px;height:1px;background:#bdbdbd;"></div>
<div class="a" style="left:43px;top:672px;width:964px;height:1px;background:#bdbdbd;"></div>
<div class="a" style="left:43px;top:685px;width:964px;height:1px;background:#bdbdbd;"></div>
<div class="a" style="left:43px;top:698px;width:964px;height:1px;background:#bdbdbd;"></div>
<div class="a" style="left:107px;top:218px;width:1px;height:485px;background:#bdbdbd;"></div>
<div class="a" style="left:299px;top:218px;width:1px;height:485px;background:#bdbdbd;"></div>
<div class="a" style="left:424px;top:218px;width:1px;height:485px;background:#bdbdbd;"></div>
<div class="a" style="left:538px;top:218px;width:1px;height:485px;background:#bdbdbd;"></div>
<div class="a" style="left:603px;top:218px;width:1px;height:485px;background:#bdbdbd;"></div>
<div class="a" style="left:668px;top:218px;width:1px;height:485px;background:#bdbdbd;"></div>
<div class="a" style="left:733px;top:218px;width:1px;height:485px;background:#bdbdbd;"></div>
<div class="a" style="left:798px;top:218px;width:1px;height:485px;background:#bdbdbd;"></div>
<div class="a" style="left:863px;top:218px;width:1px;height:485px;background:#bdbdbd;"></div>
<div class="a" style="left:928px;top:218px;width:1px;height:485px;background:#bdbdbd;"></div>
<div class="a" style="left:993px;top:218px;width:1px;height:485px;background:#bdbdbd;"></div>
<div class="t" style="left:70.01px;top:201.80px;font-size:13.81px;line-height:13.81px;color:#ffffff;font-weight:bold;">A</div>
<div class="t" style="left:198.89px;top:201.80px;font-size:13.81px;line-height:13.81px;color:#222;">B</div>
<div class="t" style="left:357.01px;top:201.80px;font-size:13.81px;line-height:13.81px;color:#222;">C</div>
<div class="t" style="left:476.51px;top:201.80px;font-size:13.81px;line-height:13.81px;color:#222;">D</div>
<div class="t" style="left:566.39px;top:201.80px;font-size:13.81px;line-height:13.81px;color:#222;">E</div>
<div class="t" style="left:631.79px;top:201.80px;font-size:13.81px;line-height:13.81px;color:#222;">F</div>
<div class="t" style="left:695.63px;top:201.80px;font-size:13.81px;line-height:13.81px;color:#222;">G</div>
<div class="t" style="left:761.01px;top:201.80px;font-size:13.81px;line-height:13.81px;color:#222;">H</div>
<div class="t" style="left:829.08px;top:201.80px;font-size:13.81px;line-height:13.81px;color:#222;">I</div>
<div class="t" style="left:892.55px;top:201.80px;font-size:13.81px;line-height:13.81px;color:#222;">J</div>
<div class="t" style="left:956.39px;top:201.80px;font-size:13.81px;line-height:13.81px;color:#222;">K</div>
<div class="t" style="left:18.79px;top:217.87px;font-size:13.37px;line-height:13.37px;color:#ffffff;font-weight:bold;transform:scaleX(1.12);">2</div>
<div class="t" style="left:18.79px;top:230.87px;font-size:13.37px;line-height:13.37px;color:#1a1a1a;transform:scaleX(1.12);">3</div>
<div class="t" style="left:18.79px;top:243.87px;font-size:13.37px;line-height:13.37px;color:#1a1a1a;transform:scaleX(1.12);">4</div>
<div class="t" style="left:18.79px;top:256.87px;font-size:13.37px;line-height:13.37px;color:#1a1a1a;transform:scaleX(1.12);">5</div>
<div class="t" style="left:18.79px;top:269.87px;font-size:13.37px;line-height:13.37px;color:#1a1a1a;transform:scaleX(1.12);">6</div>
<div class="t" style="left:18.79px;top:282.87px;font-size:13.37px;line-height:13.37px;color:#1a1a1a;transform:scaleX(1.12);">7</div>
<div class="t" style="left:18.79px;top:295.87px;font-size:13.37px;line-height:13.37px;color:#1a1a1a;transform:scaleX(1.12);">8</div>
<div class="t" style="left:18.79px;top:308.87px;font-size:13.37px;line-height:13.37px;color:#1a1a1a;transform:scaleX(1.12);">9</div>
<div class="t" style="left:15.06px;top:321.87px;font-size:13.37px;line-height:13.37px;color:#1a1a1a;transform:scaleX(1.12);">10</div>
<div class="t" style="left:15.56px;top:334.87px;font-size:13.37px;line-height:13.37px;color:#1a1a1a;transform:scaleX(1.12);">11</div>
<div class="t" style="left:15.06px;top:347.87px;font-size:13.37px;line-height:13.37px;color:#1a1a1a;transform:scaleX(1.12);">12</div>
<div class="t" style="left:15.06px;top:360.87px;font-size:13.37px;line-height:13.37px;color:#1a1a1a;transform:scaleX(1.12);">13</div>
<div class="t" style="left:15.06px;top:373.87px;font-size:13.37px;line-height:13.37px;color:#1a1a1a;transform:scaleX(1.12);">14</div>
<div class="t" style="left:15.06px;top:386.87px;font-size:13.37px;line-height:13.37px;color:#1a1a1a;transform:scaleX(1.12);">15</div>
<div class="t" style="left:15.06px;top:399.87px;font-size:13.37px;line-height:13.37px;color:#1a1a1a;transform:scaleX(1.12);">16</div>
<div class="t" style="left:15.06px;top:412.87px;font-size:13.37px;line-height:13.37px;color:#1a1a1a;transform:scaleX(1.12);">17</div>
<div class="t" style="left:15.06px;top:425.87px;font-size:13.37px;line-height:13.37px;color:#1a1a1a;transform:scaleX(1.12);">18</div>
<div class="t" style="left:15.06px;top:438.87px;font-size:13.37px;line-height:13.37px;color:#1a1a1a;transform:scaleX(1.12);">19</div>
<div class="t" style="left:15.06px;top:451.87px;font-size:13.37px;line-height:13.37px;color:#1a1a1a;transform:scaleX(1.12);">20</div>
<div class="t" style="left:15.06px;top:464.87px;font-size:13.37px;line-height:13.37px;color:#1a1a1a;transform:scaleX(1.12);">21</div>
<div class="t" style="left:15.06px;top:477.87px;font-size:13.37px;line-height:13.37px;color:#1a1a1a;transform:scaleX(1.12);">22</div>
<div class="t" style="left:15.06px;top:490.87px;font-size:13.37px;line-height:13.37px;color:#1a1a1a;transform:scaleX(1.12);">23</div>
<div class="t" style="left:15.06px;top:503.87px;font-size:13.37px;line-height:13.37px;color:#1a1a1a;transform:scaleX(1.12);">24</div>
<div class="t" style="left:15.06px;top:516.87px;font-size:13.37px;line-height:13.37px;color:#1a1a1a;transform:scaleX(1.12);">25</div>
<div class="t" style="left:15.06px;top:529.87px;font-size:13.37px;line-height:13.37px;color:#1a1a1a;transform:scaleX(1.12);">26</div>
<div class="t" style="left:15.06px;top:542.87px;font-size:13.37px;line-height:13.37px;color:#1a1a1a;transform:scaleX(1.12);">27</div>
<div class="t" style="left:15.06px;top:555.87px;font-size:13.37px;line-height:13.37px;color:#1a1a1a;transform:scaleX(1.12);">28</div>
<div class="t" style="left:15.06px;top:568.87px;font-size:13.37px;line-height:13.37px;color:#1a1a1a;transform:scaleX(1.12);">29</div>
<div class="t" style="left:15.06px;top:581.87px;font-size:13.37px;line-height:13.37px;color:#1a1a1a;transform:scaleX(1.12);">30</div>
<div class="t" style="left:15.06px;top:594.87px;font-size:13.37px;line-height:13.37px;color:#1a1a1a;transform:scaleX(1.12);">31</div>
<div class="t" style="left:15.06px;top:607.87px;font-size:13.37px;line-height:13.37px;color:#1a1a1a;transform:scaleX(1.12);">32</div>
<div class="t" style="left:15.06px;top:620.87px;font-size:13.37px;line-height:13.37px;color:#1a1a1a;transform:scaleX(1.12);">33</div>
<div class="t" style="left:15.06px;top:633.87px;font-size:13.37px;line-height:13.37px;color:#1a1a1a;transform:scaleX(1.12);">34</div>
<div class="t" style="left:15.06px;top:646.87px;font-size:13.37px;line-height:13.37px;color:#1a1a1a;transform:scaleX(1.12);">35</div>
<div class="t" style="left:15.06px;top:659.87px;font-size:13.37px;line-height:13.37px;color:#1a1a1a;transform:scaleX(1.12);">36</div>
<div class="t" style="left:15.06px;top:672.87px;font-size:13.37px;line-height:13.37px;color:#1a1a1a;transform:scaleX(1.12);">37</div>
<div class="t" style="left:15.06px;top:685.87px;font-size:13.37px;line-height:13.37px;color:#1a1a1a;transform:scaleX(1.12);">38</div>
<div class="t" style="left:15.06px;top:698.87px;font-size:13.37px;line-height:13.37px;color:#1a1a1a;transform:scaleX(1.12);">39</div>
<div class="t" style="left:84.51px;top:232.04px;font-size:11.05px;line-height:11.05px;color:#222;">II.94</div>
<div class="t" style="left:285.71px;top:232.04px;font-size:11.05px;line-height:11.05px;color:#222;">78</div>
<div class="t" style="left:404.58px;top:232.04px;font-size:11.05px;line-height:11.05px;color:#222;">129</div>
<div class="t" style="left:518.58px;top:232.04px;font-size:11.05px;line-height:11.05px;color:#222;">144</div>
<div class="t" style="left:81.42px;top:245.04px;font-size:11.05px;line-height:11.05px;color:#222;">III.94</div>
<div class="t" style="left:285.71px;top:245.04px;font-size:11.05px;line-height:11.05px;color:#222;">88</div>
<div class="t" style="left:404.58px;top:245.04px;font-size:11.05px;line-height:11.05px;color:#222;">121</div>
<div class="t" style="left:518.58px;top:245.04px;font-size:11.05px;line-height:11.05px;color:#222;">150</div>
<div class="t" style="left:81.23px;top:258.04px;font-size:11.05px;line-height:11.05px;color:#222;">IV.94</div>
<div class="t" style="left:285.71px;top:258.04px;font-size:11.05px;line-height:11.05px;color:#222;">95</div>
<div class="t" style="left:404.58px;top:258.04px;font-size:11.05px;line-height:11.05px;color:#222;">105</div>
<div class="t" style="left:518.58px;top:258.04px;font-size:11.05px;line-height:11.05px;color:#222;">139</div>
<div class="t" style="left:87.58px;top:271.04px;font-size:11.05px;line-height:11.05px;color:#222;">I.95</div>
<div class="t" style="left:285.71px;top:271.04px;font-size:11.05px;line-height:11.05px;color:#222;">91</div>
<div class="t" style="left:410.71px;top:271.04px;font-size:11.05px;line-height:11.05px;color:#222;">89</div>
<div class="t" style="left:518.58px;top:271.04px;font-size:11.05px;line-height:11.05px;color:#222;">126</div>
<div class="t" style="left:84.51px;top:284.04px;font-size:11.05px;line-height:11.05px;color:#222;">II.95</div>
<div class="t" style="left:285.71px;top:284.04px;font-size:11.05px;line-height:11.05px;color:#222;">83</div>
<div class="t" style="left:410.71px;top:284.04px;font-size:11.05px;line-height:11.05px;color:#222;">95</div>
<div class="t" style="left:518.58px;top:284.04px;font-size:11.05px;line-height:11.05px;color:#222;">130</div>
<div class="t" style="left:81.42px;top:297.04px;font-size:11.05px;line-height:11.05px;color:#222;">III.95</div>
<div class="t" style="left:285.71px;top:297.04px;font-size:11.05px;line-height:11.05px;color:#222;">91</div>
<div class="t" style="left:410.71px;top:297.04px;font-size:11.05px;line-height:11.05px;color:#222;">97</div>
<div class="t" style="left:518.58px;top:297.04px;font-size:11.05px;line-height:11.05px;color:#222;">139</div>
<div class="t" style="left:81.23px;top:310.04px;font-size:11.05px;line-height:11.05px;color:#222;">IV.95</div>
<div class="t" style="left:285.71px;top:310.04px;font-size:11.05px;line-height:11.05px;color:#222;">90</div>
<div class="t" style="left:410.71px;top:310.04px;font-size:11.05px;line-height:11.05px;color:#222;">96</div>
<div class="t" style="left:518.58px;top:310.04px;font-size:11.05px;line-height:11.05px;color:#222;">138</div>
<div class="t" style="left:87.58px;top:323.04px;font-size:11.05px;line-height:11.05px;color:#222;">I.96</div>
<div class="t" style="left:285.71px;top:323.04px;font-size:11.05px;line-height:11.05px;color:#222;">62</div>
<div class="t" style="left:410.71px;top:323.04px;font-size:11.05px;line-height:11.05px;color:#222;">93</div>
<div class="t" style="left:518.58px;top:323.04px;font-size:11.05px;line-height:11.05px;color:#222;">109</div>
<div class="t" style="left:84.51px;top:336.04px;font-size:11.05px;line-height:11.05px;color:#222;">II.96</div>
<div class="t" style="left:285.71px;top:336.04px;font-size:11.05px;line-height:11.05px;color:#222;">79</div>
<div class="t" style="left:410.71px;top:336.04px;font-size:11.05px;line-height:11.05px;color:#222;">89</div>
<div class="t" style="left:519.38px;top:336.04px;font-size:11.05px;line-height:11.05px;color:#222;">119</div>
<div class="t" style="left:81.42px;top:349.04px;font-size:11.05px;line-height:11.05px;color:#222;">III.96</div>
<div class="t" style="left:285.71px;top:349.04px;font-size:11.05px;line-height:11.05px;color:#222;">79</div>
<div class="t" style="left:410.71px;top:349.04px;font-size:11.05px;line-height:11.05px;color:#222;">86</div>
<div class="t" style="left:519.38px;top:349.04px;font-size:11.05px;line-height:11.05px;color:#222;">112</div>
<div class="t" style="left:81.23px;top:362.04px;font-size:11.05px;line-height:11.05px;color:#222;">IV.96</div>
<div class="t" style="left:285.71px;top:362.04px;font-size:11.05px;line-height:11.05px;color:#222;">69</div>
<div class="t" style="left:410.71px;top:362.04px;font-size:11.05px;line-height:11.05px;color:#222;">91</div>
<div class="t" style="left:518.58px;top:362.04px;font-size:11.05px;line-height:11.05px;color:#222;">108</div>
<div class="t" style="left:87.58px;top:375.04px;font-size:11.05px;line-height:11.05px;color:#222;">I.97</div>
<div class="t" style="left:285.71px;top:375.04px;font-size:11.05px;line-height:11.05px;color:#222;">62</div>
<div class="t" style="left:410.71px;top:375.04px;font-size:11.05px;line-height:11.05px;color:#222;">86</div>
<div class="t" style="left:518.58px;top:375.04px;font-size:11.05px;line-height:11.05px;color:#222;">105</div>
<div class="t" style="left:84.51px;top:388.04px;font-size:11.05px;line-height:11.05px;color:#222;">II.97</div>
<div class="t" style="left:285.71px;top:388.04px;font-size:11.05px;line-height:11.05px;color:#222;">55</div>
<div class="t" style="left:410.71px;top:388.04px;font-size:11.05px;line-height:11.05px;color:#222;">82</div>
<div class="t" style="left:524.71px;top:388.04px;font-size:11.05px;line-height:11.05px;color:#222;">94</div>
<div class="t" style="left:81.42px;top:401.04px;font-size:11.05px;line-height:11.05px;color:#222;">III.97</div>
<div class="t" style="left:285.71px;top:401.04px;font-size:11.05px;line-height:11.05px;color:#222;">67</div>
<div class="t" style="left:410.71px;top:401.04px;font-size:11.05px;line-height:11.05px;color:#222;">81</div>
<div class="t" style="left:518.58px;top:401.04px;font-size:11.05px;line-height:11.05px;color:#222;">101</div>
<div class="t" style="left:81.23px;top:414.04px;font-size:11.05px;line-height:11.05px;color:#222;">IV.97</div>
<div class="t" style="left:285.71px;top:414.04px;font-size:11.05px;line-height:11.05px;color:#222;">66</div>
<div class="t" style="left:410.71px;top:414.04px;font-size:11.05px;line-height:11.05px;color:#222;">77</div>
<div class="t" style="left:518.58px;top:414.04px;font-size:11.05px;line-height:11.05px;color:#222;">102</div>
<div class="t" style="left:87.58px;top:427.04px;font-size:11.05px;line-height:11.05px;color:#222;">I.98</div>
<div class="t" style="left:285.71px;top:427.04px;font-size:11.05px;line-height:11.05px;color:#222;">62</div>
<div class="t" style="left:410.71px;top:427.04px;font-size:11.05px;line-height:11.05px;color:#222;">68</div>
<div class="t" style="left:524.71px;top:427.04px;font-size:11.05px;line-height:11.05px;color:#222;">96</div>
<div class="t" style="left:84.51px;top:440.04px;font-size:11.05px;line-height:11.05px;color:#222;">II.98</div>
<div class="t" style="left:285.71px;top:440.04px;font-size:11.05px;line-height:11.05px;color:#222;">62</div>
<div class="t" style="left:410.71px;top:440.04px;font-size:11.05px;line-height:11.05px;color:#222;">75</div>
<div class="t" style="left:518.58px;top:440.04px;font-size:11.05px;line-height:11.05px;color:#222;">100</div>
<div class="t" style="left:87.58px;top:687.04px;font-size:11.05px;line-height:11.05px;color:#222;">I.03</div>
<div class="t" style="left:285.71px;top:687.04px;font-size:11.05px;line-height:11.05px;color:#222;">95</div>
<div class="t" style="left:410.71px;top:687.04px;font-size:11.05px;line-height:11.05px;color:#222;">82</div>
<div class="t" style="left:518.58px;top:687.04px;font-size:11.05px;line-height:11.05px;color:#222;">129</div>
<div class="t" style="left:84.51px;top:700.04px;font-size:11.05px;line-height:11.05px;color:#222;">II.03</div>
<div class="t" style="left:279.58px;top:700.04px;font-size:11.05px;line-height:11.05px;color:#222;">105</div>
<div class="t" style="left:410.71px;top:700.04px;font-size:11.05px;line-height:11.05px;color:#222;">90</div>
<div class="t" style="left:518.58px;top:700.04px;font-size:11.05px;line-height:11.05px;color:#222;">140</div>
<div class="t" style="left:113.00px;top:219.24px;font-size:11.05px;line-height:11.05px;color:#222;letter-spacing:-0.063px;">mehr als 2 Monate, weniger als 1 Jahr</div>
<div class="t" style="left:347.00px;top:219.24px;font-size:11.05px;line-height:11.05px;color:#222;letter-spacing:-0.081px;">mehr als 1 Jahr</div>
<div class="a" style="left:425px;top:218px;width:113px;height:12px;overflow:hidden">
<div class="t" style="left:-4.00px;top:1.24px;font-size:11.05px;line-height:11.05px;color:#222;letter-spacing:-0.027px;">davon Arbeitsmigranten</div>
</div>
<svg class="a" style="left:424px;top:222px" width="4" height="6" viewBox="0 0 4 6"><path d="M0 3l4-3v6z" fill="#111"/></svg>
<div class="a" style="left:43px;top:217px;width:65px;height:14px;border:2px solid #111;border-top:1px solid #111;border-left:1px solid #111;"></div>
<div class="a" style="left:104px;top:229px;width:7px;height:4px;background:#111;"></div>
<div class="a" style="left:106px;top:217px;width:2px;height:16px;background:#111;"></div>
<div class="a" style="left:71px;top:448px;width:482px;height:236px;background:#fff;"></div>
<svg class="a" style="left:0;top:0" width="1024" height="768" viewBox="0 0 1024 768"><path d="M102 611.4H427" stroke="#b3b3b3" stroke-width="1.3"/><path d="M102 572.8H427" stroke="#b3b3b3" stroke-width="1.3"/><path d="M102 534.2H427" stroke="#b3b3b3" stroke-width="1.3"/><path d="M102 495.6H427" stroke="#b3b3b3" stroke-width="1.3"/><path d="M102 457.0H427" stroke="#b3b3b3" stroke-width="1.3"/><path d="M102 457.0V650" stroke="#b3b3b3" stroke-width="1.3"/><path d="M427 457.0V650" stroke="#b3b3b3" stroke-width="1.3"/><path d="M102 650H427" stroke="#b3b3b3" stroke-width="1.3"/><path d="M102.0 650V654" stroke="#b3b3b3" stroke-width="1"/><path d="M118.2 650V654" stroke="#b3b3b3" stroke-width="1"/><path d="M134.5 650V654" stroke="#b3b3b3" stroke-width="1"/><path d="M150.8 650V654" stroke="#b3b3b3" stroke-width="1"/><path d="M167.0 650V654" stroke="#b3b3b3" stroke-width="1"/><path d="M183.2 650V654" stroke="#b3b3b3" stroke-width="1"/><path d="M199.5 650V654" stroke="#b3b3b3" stroke-width="1"/><path d="M215.8 650V654" stroke="#b3b3b3" stroke-width="1"/><path d="M232.0 650V654" stroke="#b3b3b3" stroke-width="1"/><path d="M248.2 650V654" stroke="#b3b3b3" stroke-width="1"/><path d="M264.5 650V654" stroke="#b3b3b3" stroke-width="1"/><path d="M280.8 650V654" stroke="#b3b3b3" stroke-width="1"/><path d="M297.0 650V654" stroke="#b3b3b3" stroke-width="1"/><path d="M313.2 650V654" stroke="#b3b3b3" stroke-width="1"/><path d="M329.5 650V654" stroke="#b3b3b3" stroke-width="1"/><path d="M345.8 650V654" stroke="#b3b3b3" stroke-width="1"/><path d="M362.0 650V654" stroke="#b3b3b3" stroke-width="1"/><path d="M378.2 650V654" stroke="#b3b3b3" stroke-width="1"/><path d="M394.5 650V654" stroke="#b3b3b3" stroke-width="1"/><path d="M410.8 650V654" stroke="#b3b3b3" stroke-width="1"/><path d="M427.0 650V654" stroke="#b3b3b3" stroke-width="1"/><path d="M98 650.0H102" stroke="#b3b3b3" stroke-width="1"/><path d="M98 611.4H102" stroke="#b3b3b3" stroke-width="1"/><path d="M98 572.8H102" stroke="#b3b3b3" stroke-width="1"/><path d="M98 534.2H102" stroke="#b3b3b3" stroke-width="1"/><path d="M98 495.6H102" stroke="#b3b3b3" stroke-width="1"/><path d="M98 457.0H102" stroke="#b3b3b3" stroke-width="1"/><rect x="105.6" y="490.2" width="9" height="99.6" fill="#ff420e" stroke="#4a1e0c" stroke-width="1.1"/><rect x="105.6" y="589.8" width="9" height="60.2" fill="#004586" stroke="#10202e" stroke-width="1.1"/><rect x="121.9" y="488.7" width="9" height="93.4" fill="#ff420e" stroke="#4a1e0c" stroke-width="1.1"/><rect x="121.9" y="582.1" width="9" height="67.9" fill="#004586" stroke="#10202e" stroke-width="1.1"/><rect x="138.1" y="495.6" width="9" height="81.1" fill="#ff420e" stroke="#4a1e0c" stroke-width="1.1"/><rect x="138.1" y="576.7" width="9" height="73.3" fill="#004586" stroke="#10202e" stroke-width="1.1"/><rect x="154.4" y="511.0" width="9" height="68.7" fill="#ff420e" stroke="#4a1e0c" stroke-width="1.1"/><rect x="154.4" y="579.7" width="9" height="70.3" fill="#004586" stroke="#10202e" stroke-width="1.1"/><rect x="170.6" y="512.6" width="9" height="73.3" fill="#ff420e" stroke="#4a1e0c" stroke-width="1.1"/><rect x="170.6" y="585.9" width="9" height="64.1" fill="#004586" stroke="#10202e" stroke-width="1.1"/><rect x="186.9" y="504.9" width="9" height="74.9" fill="#ff420e" stroke="#4a1e0c" stroke-width="1.1"/><rect x="186.9" y="579.7" width="9" height="70.3" fill="#004586" stroke="#10202e" stroke-width="1.1"/><rect x="203.1" y="506.4" width="9" height="74.1" fill="#ff420e" stroke="#4a1e0c" stroke-width="1.1"/><rect x="203.1" y="580.5" width="9" height="69.5" fill="#004586" stroke="#10202e" stroke-width="1.1"/><rect x="219.4" y="530.3" width="9" height="71.8" fill="#ff420e" stroke="#4a1e0c" stroke-width="1.1"/><rect x="219.4" y="602.1" width="9" height="47.9" fill="#004586" stroke="#10202e" stroke-width="1.1"/><rect x="414.4" y="563.5" width="9" height="47.9" fill="#ff420e" stroke="#4a1e0c" stroke-width="1.1"/><rect x="414.4" y="611.4" width="9" height="38.6" fill="#004586" stroke="#10202e" stroke-width="1.1"/><path d="M110.1 538.8 C111.9 538.3 122.8 533.8 126.4 534.2 C130.0 534.6 139.0 540.6 142.6 542.7 C146.2 544.8 155.3 552.0 158.9 552.7 C162.5 553.5 171.5 550.8 175.1 549.6 C178.7 548.5 187.8 543.4 191.4 542.7 C195.0 542.0 204.0 540.9 207.6 543.5 C211.2 546.0 222.1 563.4 223.9 565.9" stroke="#ffd320" stroke-width="2.2" stroke-linejoin="round" fill="none"/></svg>
<div class="t" style="left:90.31px;top:646.30px;font-size:7.56px;line-height:7.56px;color:#333;">0</div>
<div class="t" style="left:86.09px;top:607.70px;font-size:7.56px;line-height:7.56px;color:#333;">50</div>
<div class="t" style="left:81.90px;top:569.10px;font-size:7.56px;line-height:7.56px;color:#333;">100</div>
<div class="t" style="left:81.90px;top:530.50px;font-size:7.56px;line-height:7.56px;color:#333;">150</div>
<div class="t" style="left:81.90px;top:491.90px;font-size:7.56px;line-height:7.56px;color:#333;">200</div>
<div class="t" style="left:81.90px;top:453.30px;font-size:7.56px;line-height:7.56px;color:#333;">250</div>
<div class="t" style="left:102.77px;top:667.80px;font-size:7.56px;line-height:7.56px;color:#333;">II.94</div>
<div class="t" style="left:117.97px;top:657.80px;font-size:7.56px;line-height:7.56px;color:#333;">III.94</div>
<div class="t" style="left:134.15px;top:667.80px;font-size:7.56px;line-height:7.56px;color:#333;">IV.94</div>
<div class="t" style="left:152.57px;top:657.80px;font-size:7.56px;line-height:7.56px;color:#333;">I.95</div>
<div class="t" style="left:167.77px;top:667.80px;font-size:7.56px;line-height:7.56px;color:#333;">II.95</div>
<div class="t" style="left:182.97px;top:657.80px;font-size:7.56px;line-height:7.56px;color:#333;">III.95</div>
<div class="t" style="left:199.15px;top:667.80px;font-size:7.56px;line-height:7.56px;color:#333;">IV.95</div>
<div class="t" style="left:217.57px;top:657.80px;font-size:7.56px;line-height:7.56px;color:#333;">I.96</div>
<div class="t" style="left:232.77px;top:667.80px;font-size:7.56px;line-height:7.56px;color:#333;">II.96</div>
<div class="t" style="left:247.97px;top:657.80px;font-size:7.56px;line-height:7.56px;color:#333;">III.96</div>
<div class="t" style="left:264.15px;top:667.80px;font-size:7.56px;line-height:7.56px;color:#333;">IV.96</div>
<div class="t" style="left:282.57px;top:657.80px;font-size:7.56px;line-height:7.56px;color:#333;">I.97</div>
<div class="t" style="left:297.77px;top:667.80px;font-size:7.56px;line-height:7.56px;color:#333;">II.97</div>
<div class="t" style="left:312.97px;top:657.80px;font-size:7.56px;line-height:7.56px;color:#333;">III.97</div>
<div class="t" style="left:329.15px;top:667.80px;font-size:7.56px;line-height:7.56px;color:#333;">IV.97</div>
<div class="t" style="left:347.57px;top:657.80px;font-size:7.56px;line-height:7.56px;color:#333;">I.98</div>
<div class="t" style="left:362.77px;top:667.80px;font-size:7.56px;line-height:7.56px;color:#333;">II.98</div>
<div class="t" style="left:377.97px;top:657.80px;font-size:7.56px;line-height:7.56px;color:#333;">III.98</div>
<div class="t" style="left:394.15px;top:667.80px;font-size:7.56px;line-height:7.56px;color:#333;">IV.98</div>
<div class="t" style="left:412.57px;top:657.80px;font-size:7.56px;line-height:7.56px;color:#333;">I.99</div>
<div class="a" style="left:440px;top:545px;width:7px;height:8px;background:#ff420e;border:1px solid #3a1a10;border-radius:1px;"></div>
<div class="a" style="left:440px;top:557px;width:7px;height:8px;background:#004586;border:1px solid #102030;border-radius:1px;"></div>
<div class="a" style="left:440px;top:579px;width:8px;height:3px;background:#ffd320;"></div>
<div class="t" style="left:450.00px;top:546.80px;font-size:7.56px;line-height:7.56px;color:#222;letter-spacing:0.422px;">mehr als 1 Jahr</div>
<div class="t" style="left:450.00px;top:557.80px;font-size:7.56px;line-height:7.56px;color:#222;letter-spacing:0.371px;">mehr als 2 Monate,</div>
<div class="t" style="left:450.02px;top:567.30px;font-size:7.56px;line-height:7.56px;color:#222;letter-spacing:0.391px;">weniger als 1 Jahr</div>
<div class="t" style="left:450.00px;top:577.80px;font-size:7.56px;line-height:7.56px;color:#222;letter-spacing:0.409px;">davon Arbeitsmigranten</div>
<div class="a" style="left:67px;top:444px;width:7px;height:7px;background:radial-gradient(circle at 60% 35%,#60f060,#18b018 60%);border:1px solid #041e04;"></div>
<div class="a" style="left:67px;top:562px;width:7px;height:7px;background:radial-gradient(circle at 60% 35%,#60f060,#18b018 60%);border:1px solid #041e04;"></div>
<div class="a" style="left:67px;top:681px;width:7px;height:7px;background:radial-gradient(circle at 60% 35%,#60f060,#18b018 60%);border:1px solid #041e04;"></div>
<div class="a" style="left:307px;top:444px;width:7px;height:7px;background:radial-gradient(circle at 60% 35%,#60f060,#18b018 60%);border:1px solid #041e04;"></div>
<div class="a" style="left:307px;top:681px;width:7px;height:7px;background:radial-gradient(circle at 60% 35%,#60f060,#18b018 60%);border:1px solid #041e04;"></div>
<div class="a" style="left:548px;top:444px;width:7px;height:7px;background:radial-gradient(circle at 60% 35%,#60f060,#18b018 60%);border:1px solid #041e04;"></div>
<div class="a" style="left:548px;top:562px;width:7px;height:7px;background:radial-gradient(circle at 60% 35%,#60f060,#18b018 60%);border:1px solid #041e04;"></div>
<div class="a" style="left:548px;top:681px;width:7px;height:7px;background:radial-gradient(circle at 60% 35%,#60f060,#18b018 60%);border:1px solid #041e04;"></div>
<div class="a" style="left:43px;top:439px;width:24px;height:23px;background:#c4c4c4;border:1px solid #111;"></div>
<svg class="a" style="left:45px;top:441px" width="20" height="19" viewBox="0 0 20 19"><circle cx="10" cy="3.5" r="2" fill="none" stroke="#777" stroke-width="1.3"/><path d="M10 5.5V17M6 8h8" stroke="#777" stroke-width="1.6"/><path d="M2.5 11c0.5 4 3.5 6 7.5 6s7-2 7.5-6" stroke="#777" stroke-width="1.8" fill="none"/><path d="M1 12l2.5-2.5 1.5 3zM19 12l-2.5-2.5-1.5 3z" fill="#777"/></svg>
<div class="a" style="left:1007px;top:199px;width:15px;height:4px;background:#111;"></div>
<div class="a" style="left:1007px;top:203px;width:15px;height:500px;background:#d3d1ce;"></div>
<div class="a" style="left:1007px;top:204px;width:15px;height:14px;background:linear-gradient(#fdfdfd,#e8e6e3);border:1px solid #b0aeab;border-radius:3px;"></div>
<svg class="a" style="left:1009px;top:207px" width="11" height="8" viewBox="0 0 11 8"><path d="M2 5.5l3.5-3.5 3.5 3.5" stroke="#222" stroke-width="1.6" fill="none"/></svg>
<div class="a" style="left:1007px;top:218px;width:15px;height:192px;background:linear-gradient(90deg,#9ab8e8,#8aaee2 60%,#7b9fd6);border:1px solid #6a8cc0;"></div>
<div class="a" style="left:1011px;top:313px;width:6px;height:1px;background:#5a7ab0;"></div>
<div class="a" style="left:1011px;top:315px;width:6px;height:1px;background:#5a7ab0;"></div>
<div class="a" style="left:1011px;top:317px;width:6px;height:1px;background:#5a7ab0;"></div>
<div class="a" style="left:1007px;top:689px;width:15px;height:13px;background:linear-gradient(#fdfdfd,#e8e6e3);border:1px solid #b0aeab;border-radius:3px;"></div>
<svg class="a" style="left:1009px;top:691px" width="11" height="8" viewBox="0 0 11 8"><path d="M2 2.5l3.5 3.5 3.5-3.5" stroke="#222" stroke-width="1.6" fill="none"/></svg>
<div class="a" style="left:1022px;top:157px;width:2px;height:546px;background:#edeceb;"></div>
<div class="a" style="left:1022px;top:157px;width:1px;height:42px;background:#b8b6b3;"></div>
<div class="a" style="left:0px;top:703px;width:1024px;height:17px;background:#edeceb;"></div>
<div class="a" style="left:4px;top:704px;width:13px;height:14px;background:linear-gradient(#dedcd9,#cfcdca);border-radius:2px;"></div>
<div class="a" style="left:19px;top:704px;width:13px;height:14px;background:linear-gradient(#dedcd9,#cfcdca);border-radius:2px;"></div>
<div class="a" style="left:34px;top:704px;width:13px;height:14px;background:linear-gradient(#dedcd9,#cfcdca);border-radius:2px;"></div>
<div class="a" style="left:48px;top:704px;width:13px;height:14px;background:linear-gradient(#dedcd9,#cfcdca);border-radius:2px;"></div>
<svg class="a" style="left:4px;top:704px" width="58" height="14" viewBox="0 0 58 14"><path d="M4 4v6M9 4l-3 3 3 3" stroke="#b0b0b0" stroke-width="1.2" fill="none"/><path d="M22 4l-3 3 3 3z" fill="#b0b0b0"/><path d="M36 4l4 3-4 3z" fill="#222"/><path d="M49 4l4 3-4 3zM54.5 4v6" fill="#222" stroke="#222" stroke-width="0.8"/></svg>
<svg class="a" style="left:0px;top:703px" width="280" height="16" viewBox="0 0 280 16"><path d="M63 0.5 L69 14.5 H134 L129 0.5z" fill="#d6d4d1" stroke="#222" stroke-width="1"/>
<path d="M203 0.5 L199 14.5 H261 Q263.5 14.5 263.5 12 V0.5z" fill="#d6d4d1" stroke="#222" stroke-width="1"/>
<path d="M129 0.5 L134.5 14.5 H196 L202 0.5z" fill="#ffffff" stroke="#222" stroke-width="1"/>
<rect x="266" y="0" width="3" height="15" fill="#111"/></svg>
<div class="t" style="left:76.00px;top:702.85px;font-size:13.52px;line-height:13.52px;color:#222;letter-spacing:-0.479px;">Tabelle1</div>
<div class="t" style="left:138.00px;top:702.85px;font-size:13.52px;line-height:13.52px;color:#111;letter-spacing:0.344px;font-weight:bold;">Tabelle2</div>
<div class="t" style="left:207.70px;top:702.85px;font-size:13.52px;line-height:13.52px;color:#222;letter-spacing:-0.265px;">Tabelle4</div>
<div class="a" style="left:274px;top:704px;width:15px;height:14px;background:linear-gradient(#fdfdfd,#e8e6e3);border:1px solid #b0aeab;border-radius:3px;"></div>
<svg class="a" style="left:276px;top:706px" width="11" height="10" viewBox="0 0 11 10"><path d="M6.5 2l-3 3 3 3" stroke="#222" stroke-width="1.5" fill="none"/></svg>
<div class="a" style="left:289px;top:703px;width:701px;height:15px;background:#d3d1ce;"></div>
<div class="a" style="left:289px;top:704px;width:319px;height:13px;background:linear-gradient(#9ab8e8,#8aaee2 60%,#7b9fd6);border:1px solid #6a8cc0;"></div>
<div class="a" style="left:444px;top:708px;width:1px;height:5px;background:#5a7ab0;"></div>
<div class="a" style="left:446px;top:708px;width:1px;height:5px;background:#5a7ab0;"></div>
<div class="a" style="left:448px;top:708px;width:1px;height:5px;background:#5a7ab0;"></div>
<div class="a" style="left:989px;top:704px;width:15px;height:14px;background:linear-gradient(#fdfdfd,#e8e6e3);border:1px solid #b0aeab;border-radius:3px;"></div>
<svg class="a" style="left:991px;top:706px" width="11" height="10" viewBox="0 0 11 10"><path d="M4 2l3 3-3 3" stroke="#222" stroke-width="1.5" fill="none"/></svg>
<div class="a" style="left:0px;top:718px;width:1024px;height:24px;background:#edeceb;"></div>
<div class="a" style="left:0px;top:741px;width:1024px;height:1px;background:#5e5c5a;"></div>
<div class="a" style="left:4px;top:721px;width:155px;height:19px;border:1px solid;border-color:#c9c7c4 #f8f8f8 #f8f8f8 #c9c7c4;"></div>
<div class="a" style="left:163px;top:721px;width:182px;height:19px;border:1px solid;border-color:#c9c7c4 #f8f8f8 #f8f8f8 #c9c7c4;"></div>
<div class="a" style="left:348px;top:721px;width:50px;height:19px;border:1px solid;border-color:#c9c7c4 #f8f8f8 #f8f8f8 #c9c7c4;"></div>
<div class="a" style="left:402px;top:721px;width:43px;height:19px;border:1px solid;border-color:#c9c7c4 #f8f8f8 #f8f8f8 #c9c7c4;"></div>
<div class="a" style="left:449px;top:721px;width:26px;height:19px;border:1px solid;border-color:#c9c7c4 #f8f8f8 #f8f8f8 #c9c7c4;"></div>
<div class="a" style="left:480px;top:721px;width:25px;height:19px;border:1px solid;border-color:#c9c7c4 #f8f8f8 #f8f8f8 #c9c7c4;"></div>
<div class="a" style="left:509px;top:721px;width:307px;height:19px;border:1px solid;border-color:#c9c7c4 #f8f8f8 #f8f8f8 #c9c7c4;"></div>
<div class="a" style="left:822px;top:721px;width:148px;height:19px;border:1px solid;border-color:#c9c7c4 #f8f8f8 #f8f8f8 #c9c7c4;"></div>
<div class="a" style="left:974px;top:721px;width:46px;height:19px;border:1px solid;border-color:#c9c7c4 #f8f8f8 #f8f8f8 #c9c7c4;"></div>
<div class="t" style="left:168.00px;top:724.42px;font-size:13.08px;line-height:13.08px;color:#222;letter-spacing:0.427px;">Default</div>
<svg class="a" style="left:453px;top:722px" width="18" height="16" viewBox="0 0 18 16"><path d="M4 1.5h8l3 3v10H4z" fill="#fff" stroke="#888"/><path d="M8.5 3v7" stroke="#c81e1e" stroke-width="2"/><circle cx="8.5" cy="13" r="1.2" fill="#c81e1e"/><path d="M6 5h5M6 8h5" stroke="#c81e1e" stroke-width="0.8"/></svg>
<svg class="a" style="left:514px;top:725px" width="18" height="12" viewBox="0 0 18 12"><path d="M3.5 0.5v8M0.5 3.5h6" stroke="#223" stroke-width="1"/><path d="M4.5 5.5h11v5h-11z" stroke="#223" fill="none" stroke-width="1" stroke-dasharray="1 1"/></svg>
<div class="t" style="left:536.00px;top:724.92px;font-size:13.08px;line-height:13.08px;color:#222;letter-spacing:0.566px;">0,92 / 8,39</div>
<svg class="a" style="left:668px;top:723px" width="16" height="15" viewBox="0 0 16 15"><path d="M1.5 4v10" stroke="#223" stroke-dasharray="1 1"/><path d="M4.5 1.5h10v10h-10z" stroke="#223" fill="none" stroke-dasharray="1 1"/><path d="M4 1h3v3H4zM12 1h3v3h-3z" fill="#223"/></svg>
<div class="t" style="left:689.00px;top:724.92px;font-size:13.08px;line-height:13.08px;color:#222;letter-spacing:0.544px;">16,69 x 8,17</div>
<svg class="a" style="left:826px;top:726px" width="13" height="13" viewBox="0 0 13 13"><circle cx="6.5" cy="6.5" r="5.6" fill="#eef3fb" stroke="#4a6a98" stroke-width="1.1"/><path d="M3.8 6.5h5.4" stroke="#333" stroke-width="1.2"/></svg>
<div class="a" style="left:843px;top:730px;width:107px;height:1px;background:#8a8a8a;"></div>
<div class="a" style="left:843px;top:729px;width:1px;height:3px;background:#999;"></div>
<div class="a" style="left:949px;top:729px;width:1px;height:3px;background:#999;"></div>
<svg class="a" style="left:895px;top:723px" width="1" height="15" viewBox="0 0 1 15"><path d="M0.5 0v15" stroke="#555" stroke-dasharray="2 1"/></svg>
<svg class="a" style="left:877px;top:726px" width="10" height="10" viewBox="0 0 10 10"><circle cx="5" cy="5" r="4" fill="#7d9cc4" stroke="#445f85" stroke-width="1"/></svg>
<svg class="a" style="left:954px;top:726px" width="13" height="13" viewBox="0 0 13 13"><circle cx="6.5" cy="6.5" r="5.6" fill="#eef3fb" stroke="#4a6a98" stroke-width="1.1"/><path d="M3.8 6.5h5.4M6.5 3.8v5.4" stroke="#333" stroke-width="1.2"/></svg>
<div class="t" style="left:983.50px;top:724.92px;font-size:13.08px;line-height:13.08px;color:#222;letter-spacing:0.152px;">79%</div>
<div class="a" style="left:0px;top:742px;width:1024px;height:26px;background:linear-gradient(#eeedec,#e3e1df);"></div>
<svg class="a" style="left:3px;top:745px" width="20" height="20" viewBox="0 0 20 20"><rect x="2.5" y="3.5" width="15" height="13" rx="1" fill="#d8e4f4" stroke="#3a6ab0" stroke-width="1.4"/><rect x="1" y="2" width="4" height="4" fill="#3a6ab0"/><rect x="15" y="2" width="4" height="4" fill="#3a6ab0"/><rect x="1" y="14" width="4" height="4" fill="#3a6ab0"/><rect x="15" y="14" width="4" height="4" fill="#3a6ab0"/><path d="M8 13l6-6" stroke="#c08020" stroke-width="2"/></svg>
<div class="a" style="left:27px;top:747px;width:3px;height:17px;background-image:radial-gradient(#aaa 40%,transparent 50%);background-size:3px 3px;"></div>
<div class="a" style="left:36px;top:745px;width:198px;height:22px;background:linear-gradient(#fbfbfa,#eeedec);border:1px solid #b3b1ae;border-radius:3px;"></div>
<svg class="a" style="left:43px;top:748px" width="16" height="17" viewBox="0 0 16 17"><rect x="1.5" y="1.5" width="13" height="14" rx="1" fill="#d0d0d0" stroke="#555"/><path d="M4 5h8M4 8h8M4 11h8" stroke="#777"/></svg>
<div class="t" style="left:66.00px;top:747.69px;font-size:14.53px;line-height:14.53px;color:#222;letter-spacing:0.223px;">ist-style: - Datei-Brow...</div>
<div class="a" style="left:237px;top:745px;width:200px;height:22px;background:linear-gradient(#d3d1ce,#cfcdca);border:1px solid #a3a19e;border-radius:3px;"></div>
<svg class="a" style="left:246px;top:748px" width="16" height="17" viewBox="0 0 16 17"><path d="M1.5 1.5h9l4 4v10h-13z" fill="#fafafa" stroke="#999"/><ellipse cx="7.5" cy="11" rx="5" ry="4" fill="#9a3a24"/></svg>
<div class="t" style="left:269.00px;top:747.69px;font-size:14.53px;line-height:14.53px;color:#222;letter-spacing:0.052px;">Untitled 1 - OpenOffice...</div>
<div class="a" style="left:942px;top:745px;width:28px;height:22px;background:#d7e3f3;border:1px solid #b8c8e0;border-top:2px solid #4a5a70;"></div>
<svg class="a" style="left:947px;top:747px" width="16" height="19" viewBox="0 0 16 19"><path d="M1.5 1.5h9l4 4v12h-13z" fill="#fafafa" stroke="#999"/><ellipse cx="7.5" cy="12" rx="5" ry="4" fill="#9a3a24"/></svg>
<div class="a" style="left:970px;top:745px;width:27px;height:22px;background:#b3b1ae;border-radius:0 4px 4px 0;"></div>
<svg class="a" style="left:999px;top:744px" width="24" height="24" viewBox="0 0 24 24"><path d="M2 4h8l2 2h10v16H2z" fill="#2a5aa8" stroke="#1a3a78"/><path d="M3 9h18v12H3z" fill="#4a80d0"/><path d="M14 2l5 3-3 3" fill="#eee"/></svg>
<div class="a" style="left:1004px;top:703px;width:3px;height:15px;background:#000;"></div>
<svg class="a" style="left:1000px;top:700px" width="24" height="28" viewBox="0 0 24 28"><path d="M6 4.5V23L10 19.3 12.8 25.2 15.6 24 12.9 18.2H18.2z" fill="#fff" stroke="#000" stroke-width="1.3" stroke-linejoin="miter"/></svg>
</body></html>
